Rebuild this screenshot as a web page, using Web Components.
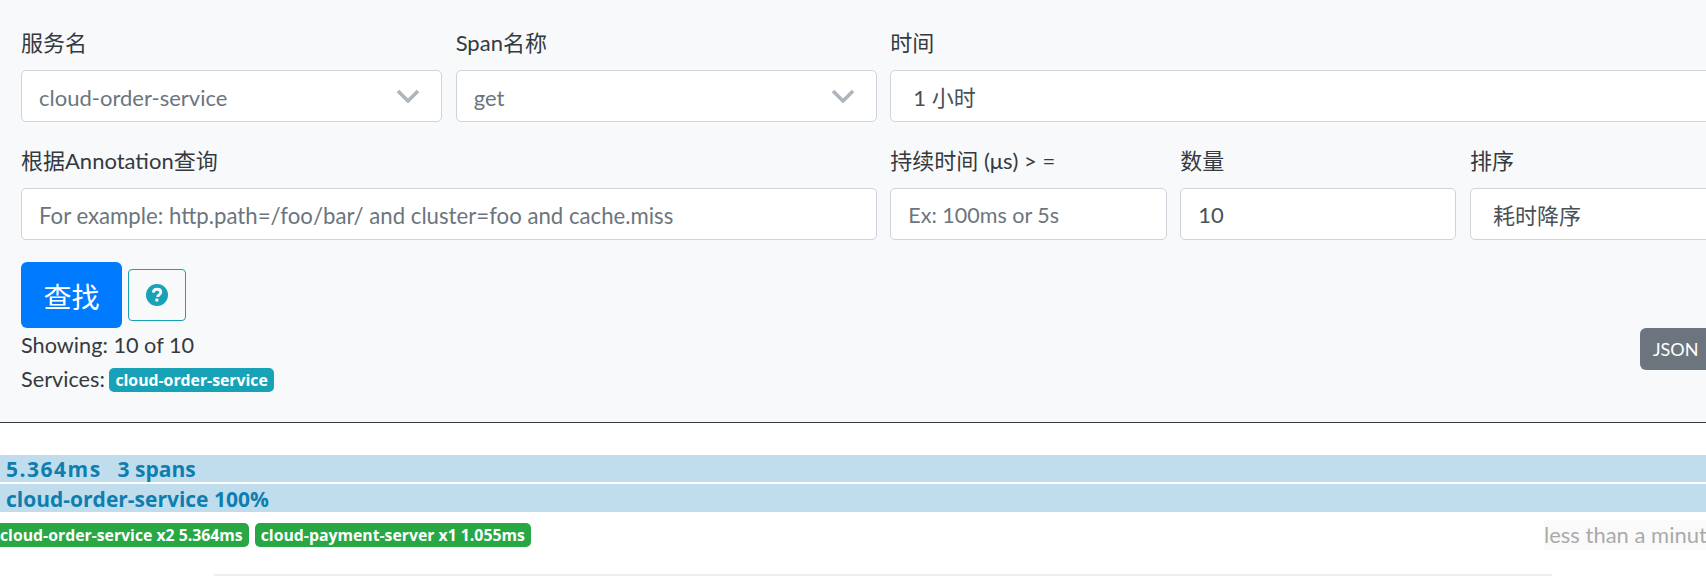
<!DOCTYPE html>
<html>
<head>
<meta charset="utf-8">
<style>
  html, body { margin: 0; background: #fff; overflow: hidden; height: 581px; }
  body { font-family: Lato, 'Noto Sans CJK SC', sans-serif; }
</style>
</head>
<body>
<trace-search>
  <form-field slot="fields" span="3" label="服务名"><fake-select value="cloud-order-service" muted chevron></fake-select></form-field>
  <form-field slot="fields" span="3" label="Span名称"><fake-select value="get" muted chevron></fake-select></form-field>
  <form-field slot="fields" span="6" label="时间"><fake-select value="1 小时" pad="22"></fake-select></form-field>
  <form-field slot="fields" span="6" label="根据Annotation查询"><fake-select size="22.2" placeholder="For example: http.path=/foo/bar/ and cluster=foo and cache.miss"></fake-select></form-field>
  <form-field slot="fields" span="2" label="持续时间 (μs) > ="><fake-select size="21.5" placeholder="Ex: 100ms or 5s"></fake-select></form-field>
  <form-field slot="fields" span="2" label="数量"><fake-select value="10"></fake-select></form-field>
  <form-field slot="fields" span="2" label="排序"><fake-select value="耗时降序" pad="22"></fake-select></form-field>
</trace-search>
<trace-row></trace-row>

<script>
const fieldTpl = document.createElement('template');
fieldTpl.innerHTML = `
  <style>
    :host { display: flex; flex-direction: column; min-width: 0; color: #343a40; }
    label { font-size: 22px; line-height: 28px; height: 28px; margin-bottom: 13px; }
  </style>
  <label></label>
  <slot></slot>
`;
class FormField extends HTMLElement {
  constructor() {
    super();
    this.attachShadow({ mode: 'open' }).appendChild(fieldTpl.content.cloneNode(true));
  }
  connectedCallback() {
    this.shadowRoot.querySelector('label').textContent = this.getAttribute('label');
    this.style.gridColumn = 'span ' + this.getAttribute('span');
  }
}
customElements.define('form-field', FormField);

const selectTpl = document.createElement('template');
selectTpl.innerHTML = `
  <style>
    :host { display: flex; align-items: center; justify-content: space-between; box-sizing: border-box; height: 52px;
      background: #fff; border: 1px solid #ced4da; border-radius: 5px; padding: 0 17px; font-size: 22px; color: #495057; overflow: hidden; white-space: nowrap; }
    :host([muted]) { color: #6c757d; padding-top: 2px; }
    :host([placeholder]) { padding-top: 2px; }
    .ph { color: #6c757d; }
    svg { flex: none; margin-right: 4px; margin-top: -2px; }
  </style>
  <span class="txt"></span>
`;
class FakeSelect extends HTMLElement {
  constructor() {
    super();
    this.attachShadow({ mode: 'open' }).appendChild(selectTpl.content.cloneNode(true));
  }
  connectedCallback() {
    const txt = this.shadowRoot.querySelector('.txt');
    if (this.hasAttribute('placeholder')) {
      txt.textContent = this.getAttribute('placeholder');
      txt.classList.add('ph');
    } else {
      txt.textContent = this.getAttribute('value');
    }
    if (this.hasAttribute('size')) txt.style.fontSize = this.getAttribute('size') + 'px';
    if (this.hasAttribute('pad')) this.style.paddingLeft = this.getAttribute('pad') + 'px';
    if (this.hasAttribute('chevron')) {
      txt.insertAdjacentHTML('afterend', '<svg width="24" height="16" viewBox="0 0 24 16"><path d="M2 3l10 10L22 3" fill="none" stroke="#adb5bd" stroke-width="3.6"/></svg>');
    }
  }
}
customElements.define('fake-select', FakeSelect);

const searchTpl = document.createElement('template');
searchTpl.innerHTML = `
  <style>
    :host { display: block; width: 1745px; box-sizing: border-box; height: 423px; padding: 29px 0 0 21px; background: #f8f9fa; border-bottom: 1px solid #343a40; color: #343a40; }
    .grid { display: grid; grid-template-columns: repeat(12, 131.3px); column-gap: 13.6px; row-gap: 25px; }
    .actions { display: flex; align-items: center; gap: 6px; margin-top: 22px; }
    .search { box-sizing: border-box; width: 101px; height: 66px; padding-top: 2px; background: #007bff; color: #fff; border-radius: 6px; font-size: 28px; display: flex; align-items: center; justify-content: center; }
    .help { box-sizing: border-box; width: 58px; height: 52px; border: 1px solid #17a2b8; border-radius: 4px; display: flex; align-items: center; justify-content: center; }
    .bottom { display: flex; justify-content: space-between; }
    .info { font-size: 21.7px; line-height: 28px; padding-top: 3px; }
    .info div + div { margin-top: 6px; }
    .badge { display: inline-block; font-family: 'Open Sans', sans-serif; background: #17a2b8; color: #fff; font-size: 15.8px; font-weight: 700; line-height: 24px; padding: 0 6px; border-radius: 5px; vertical-align: 1px; margin-left: -1px; }
    .json { box-sizing: border-box; display: flex; align-items: center; gap: 6px; width: 105px; height: 42px; background: #6c757d; color: #fff; border-radius: 6px; font-size: 18px; padding-left: 13px; white-space: nowrap; }
  </style>
  <div class="grid"><slot name="fields"></slot></div>
  <div class="actions">
    <div class="search">查找</div>
    <div class="help">
      <svg width="22" height="22" viewBox="0 0 22 22"><circle cx="11" cy="11" r="11" fill="#17a2b8"/><path d="M7.3 8.6c.1-2.2 1.7-3.4 3.8-3.4 2.1 0 3.7 1.2 3.7 3 0 1.5-.9 2.2-1.9 2.9-.8.5-1.1.9-1.1 1.8" fill="none" stroke="#f8f9fa" stroke-width="2.9"/><rect x="9.4" y="14.6" width="3" height="3" rx=".5" fill="#f8f9fa"/></svg>
    </div>
  </div>
  <div class="bottom">
    <div class="info">
      <div>Showing: 10 of 10</div>
      <div>Services: <span class="badge">cloud-order-service</span></div>
    </div>
    <div class="json">JSON <svg width="18" height="18" viewBox="0 0 18 18" style="flex:none"><path d="M6 1h6v6h4l-7 7-7-7h4z" fill="#fff"/><path d="M1 13h3l5 3 5-3h3v4H1z" fill="#fff"/></svg></div>
  </div>
`;
class TraceSearch extends HTMLElement {
  constructor() {
    super();
    this.attachShadow({ mode: 'open' }).appendChild(searchTpl.content.cloneNode(true));
  }
}
customElements.define('trace-search', TraceSearch);

const rowTpl = document.createElement('template');
rowTpl.innerHTML = `
  <style>
    :host { display: block; width: 1706px; overflow: hidden; padding-top: 32px; }
    .bar { display: flex; gap: 17px; height: 27px; line-height: 29px; background: #bfdded; color: #0e7eb0; font-family: 'Open Sans', sans-serif; font-size: 21px; font-weight: 700; padding-left: 6px; white-space: nowrap; }
    .bar + .bar { height: 28px; line-height: 30px; margin-top: 2px; }
    .dur { letter-spacing: 1.5px; margin-right: -1px; }
    .meta { display: flex; justify-content: space-between; height: 36px; padding-top: 6px; align-items: center; box-sizing: content-box; }
    .tags { display: flex; gap: 6px; margin-top: -3px; }
    .tag { background: #28a745; color: #fff; font-family: 'Open Sans', sans-serif; font-size: 15.8px; font-weight: 700; line-height: 24px; padding: 0 6px; border-radius: 5px; white-space: nowrap; }
    .tag.first { padding-left: 0; border-radius: 0 5px 5px 0; }
    .ago { background: #fafafa; color: #aaa; font-size: 22px; line-height: 30px; width: 162px; white-space: nowrap; overflow: hidden; margin-top: -3px; }
    hr { border: 0; height: 2px; background: #eee; margin: 20px 154px 0 214px; }
  </style>
  <div class="bar"><span class="dur">5.364ms</span><span>3 spans</span></div>
  <div class="bar">cloud-order-service 100%</div>
  <div class="meta">
    <div class="tags">
      <span class="tag first">cloud-order-service x2 5.364ms</span>
      <span class="tag">cloud-payment-server x1 1.055ms</span>
    </div>
    <div class="ago">less than a minute ago</div>
  </div>
  <hr>
`;
class TraceRow extends HTMLElement {
  constructor() {
    super();
    this.attachShadow({ mode: 'open' }).appendChild(rowTpl.content.cloneNode(true));
  }
}
customElements.define('trace-row', TraceRow);
</script>
</body>
</html>
